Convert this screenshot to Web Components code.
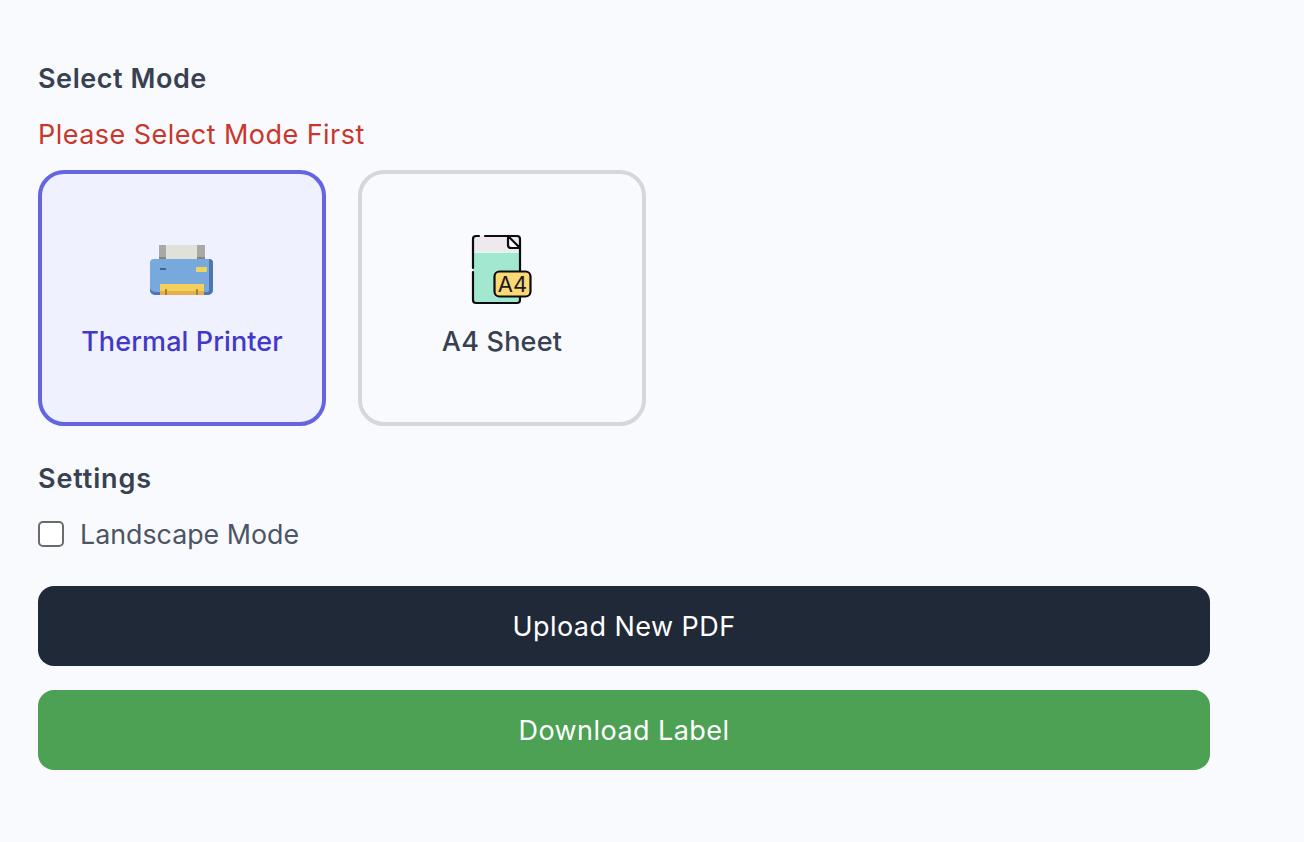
<!DOCTYPE html>
<html>
<head>
<meta charset="utf-8">
<title>Label</title>
<style>
  html, body { margin: 0; height: 100%; }
  body { background: #f9fafd; font-family: Inter, "Liberation Sans", sans-serif; }
</style>
</head>
<body>
<label-page>
  <section-title>Select Mode</section-title>
  <mode-error>Please Select Mode First</mode-error>
  <mode-picker>
    <mode-card selected label="Thermal Printer">
      <svg width="68" height="76" viewBox="-1 -13 68 76">
        <rect x="10" y="0" width="46" height="17" fill="#a8a8a4"/>
        <rect x="17" y="0" width="31" height="15" fill="#e0e1d9"/>
        <rect x="10" y="12" width="7" height="4" fill="#85857f"/>
        <rect x="48" y="12" width="8" height="4" fill="#85857f"/>
        <path d="M5 14H60a4 4 0 0 1 4 4V45a5 5 0 0 1-5 5H6a5 5 0 0 1-5-5V18a4 4 0 0 1 4-4z" fill="#78a9dc"/>
        <path d="M60 14a4 4 0 0 1 4 4V45a5 5 0 0 1-5 5H52V47H58a2 2 0 0 0 2-2z" fill="#4f76b0"/>
        <path d="M1 42a5 5 0 0 0 5 5H12V50H6a5 5 0 0 1-5-5z" fill="#4f76b0"/>
        <rect x="47" y="22" width="11" height="5" rx="1" fill="#f0d35c"/>
        <rect x="11" y="23" width="6" height="2" fill="#3f6496"/>
        <rect x="11" y="39" width="44" height="11" fill="#f3d05c"/>
        <rect x="11" y="46" width="44" height="4" fill="#e3b04c"/>
        <rect x="16" y="44" width="2" height="6" fill="#a8823a"/>
        <rect x="47" y="44" width="2" height="6" fill="#a8823a"/>
      </svg>
    </mode-card>
    <mode-card label="A4 Sheet">
      <svg width="68" height="76" viewBox="0 0 68 76">
        <path d="M5 19H52V68a3 3 0 0 1-3 3H8a3 3 0 0 1-3-3z" fill="#a2e8d0"/>
        <path d="M8 4H49a3 3 0 0 1 3 3V19H5V7a3 3 0 0 1 3-3z" fill="#efe9ef"/>
        <path d="M5 20H52" stroke="#f6fbf9" stroke-width="1.5"/>
        <path d="M40 4V13a3 3 0 0 0 3 3H52z" fill="#fbfbfb"/>
        <path d="M11 4H8a3 3 0 0 0-3 3V36M5 40V68a3 3 0 0 0 3 3H49a3 3 0 0 0 3-3V65M17 4H49a3 3 0 0 1 3 3V39M40 4V13a3 3 0 0 0 3 3H52M40 4L52 16" fill="none" stroke="#0b0b10" stroke-width="2.2" stroke-linecap="round" stroke-linejoin="round"/>
        <rect x="26.5" y="39.5" width="36" height="25" rx="5" fill="#fbd977" stroke="#0b0b10" stroke-width="2.2"/>
        <text x="44.5" y="60" text-anchor="middle" font-family="Inter, 'Liberation Sans', sans-serif" font-size="22" font-weight="400" letter-spacing="0" fill="#1a1a1f">A4</text>
      </svg>
    </mode-card>
  </mode-picker>
  <section-title class="settings">Settings</section-title>
  <check-row>Landscape Mode</check-row>
  <action-button>Upload New PDF</action-button>
  <action-button variant="green">Download Label</action-button>
</label-page>

<script>
class LabelPage extends HTMLElement {
  connectedCallback() {
    this.attachShadow({ mode: 'open' });
    this.shadowRoot.innerHTML = `
      <style>
        :host {
          display: flex;
          flex-direction: column;
          width: 1172px;
          padding: 63px 0 0 38px;
        }
      </style>
      <slot></slot>
    `;
  }
}

class SectionTitle extends HTMLElement {
  connectedCallback() {
    this.attachShadow({ mode: 'open' });
    this.shadowRoot.innerHTML = `
      <style>
        :host {
          display: block;
          height: 32px;
          line-height: 32px;
          font-size: 27px;
          letter-spacing: .55px;
          font-weight: 600;
          color: #374151;
        }
        :host(.settings) { margin-top: 37px; letter-spacing: .85px; }
      </style>
      <slot></slot>
    `;
  }
}

class ModeError extends HTMLElement {
  connectedCallback() {
    this.attachShadow({ mode: 'open' });
    this.shadowRoot.innerHTML = `
      <style>
        :host {
          display: block;
          margin-top: 24px;
          height: 32px;
          line-height: 32px;
          font-size: 27px;
          letter-spacing: .45px;
          color: #c9362b;
        }
      </style>
      <slot></slot>
    `;
  }
}

class ModePicker extends HTMLElement {
  connectedCallback() {
    this.attachShadow({ mode: 'open' });
    this.shadowRoot.innerHTML = `
      <style>
        :host { display: flex; gap: 32px; margin-top: 19px; }
      </style>
      <slot></slot>
    `;
  }
}

class ModeCard extends HTMLElement {
  connectedCallback() {
    this.attachShadow({ mode: 'open' });
    this.shadowRoot.innerHTML = `
      <style>
        :host {
          display: flex;
          flex-direction: column;
          align-items: center;
          box-sizing: border-box;
          width: 288px;
          height: 256px;
          padding-top: 58px;
          border: 4px solid #d6d7d9;
          border-radius: 26px;
          color: #374151;
          font-size: 27px;
          font-weight: 500;
          letter-spacing: .2px;
        }
        :host([selected]) {
          border-color: #6366e0;
          background: #eff2fe;
          color: #4338ca;
          letter-spacing: .1px;
        }
        .icon { display: flex; height: 76px; }
        .label { margin-top: 18px; line-height: 32px; }
      </style>
      <div class="icon"><slot></slot></div>
      <div class="label">${this.getAttribute('label')}</div>
    `;
  }
}

class CheckRow extends HTMLElement {
  connectedCallback() {
    this.attachShadow({ mode: 'open' });
    this.shadowRoot.innerHTML = `
      <style>
        :host {
          display: flex;
          align-items: center;
          gap: 16px;
          margin-top: 23px;
          margin-bottom: 12px;
          height: 32px;
          font-size: 26.8px;
          color: #4b5563;
        }
        .box {
          box-sizing: border-box;
          width: 26px;
          height: 26px;
          background: #fff;
          border: 2px solid #6b6b6b;
          border-radius: 5px;
        }
      </style>
      <span class="box"></span>
      <span><slot></slot></span>
    `;
  }
}

class ActionButton extends HTMLElement {
  connectedCallback() {
    this.attachShadow({ mode: 'open' });
    this.shadowRoot.innerHTML = `
      <style>
        :host {
          display: flex;
          align-items: center;
          justify-content: center;
          height: 80px;
          margin-top: 24px;
          border-radius: 16px;
          background: #1f2937;
          color: #fff;
          font-size: 27px;
          letter-spacing: .45px;
        }
        :host([variant="green"]) { background: #4ca154; }
      </style>
      <slot></slot>
    `;
  }
}

customElements.define('label-page', LabelPage);
customElements.define('section-title', SectionTitle);
customElements.define('mode-error', ModeError);
customElements.define('mode-picker', ModePicker);
customElements.define('mode-card', ModeCard);
customElements.define('check-row', CheckRow);
customElements.define('action-button', ActionButton);
</script>
</body>
</html>
